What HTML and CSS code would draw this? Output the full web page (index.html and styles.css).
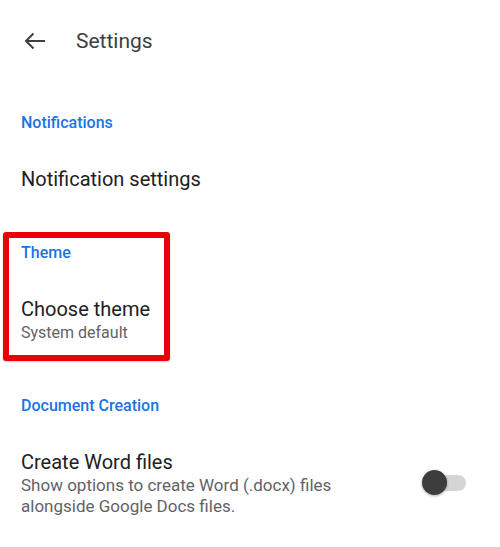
FILE: index.html
```html
<!DOCTYPE html>
<html>
<head>
    <title>Settings</title>
    <link rel="stylesheet" href="styles.css">
</head>
<body>
    <header class="app-bar">
        <svg class="back-icon" width="22" height="18" viewBox="0 0 22 18">
            <path d="M21 9H2M9.5 1.5L2 9l7.5 7.5" fill="none" stroke="#3c4043" stroke-width="2"/>
        </svg>
        <h1 class="app-title">Settings</h1>
    </header>

    <main class="settings">
        <section class="group">
            <h2 class="group-title">Notifications</h2>
            <div class="item">
                <div class="item-title">Notification settings</div>
            </div>
        </section>

        <section class="group group-marked">
            <h2 class="group-title">Theme</h2>
            <div class="item">
                <div class="item-title">Choose theme</div>
                <div class="item-summary">System default</div>
            </div>
        </section>

        <section class="group group-docs">
            <h2 class="group-title">Document Creation</h2>
            <div class="item item-switch">
                <div class="item-text">
                    <div class="item-title">Create Word files</div>
                    <div class="item-summary item-desc">Show options to create Word (.docx) files<br>alongside Google Docs files.</div>
                </div>
                <div class="switch">
                    <span class="switch-track"></span>
                    <span class="switch-thumb"></span>
                </div>
            </div>
        </section>
    </main>
</body>
</html>
```

FILE: styles.css
```css
body {
    margin: 0;
    font-family: Roboto, "Liberation Sans", sans-serif;
    background: #fff;
    color: #202124;
}
.app-bar {
    height: 82px;
    display: flex;
    align-items: center;
    padding-left: 24px;
    gap: 30px;
}
.back-icon {
    display: block;
}
.app-title {
    margin: 0;
    font-size: 21px;
    font-weight: 400;
    line-height: 28px;
    color: #3c4043;
}
.settings {
    padding: 0 21px;
}
.group {
    margin-top: 51px;
}
.group:first-child {
    margin-top: 31px;
}
.group-docs {
    margin-top: 53px;
}
.group-title {
    margin: 0 0 33px;
    font-size: 16px;
    font-weight: 500;
    line-height: 20px;
    color: #1a73e8;
}
.item-title {
    font-size: 20px;
    line-height: 26px;
    color: #202124;
}
.item-summary {
    font-size: 16px;
    line-height: 21px;
    color: #5f6368;
}
.item-desc {
    font-size: 17px;
    line-height: 21px;
}
.item-switch {
    display: flex;
    align-items: center;
    justify-content: space-between;
}
.switch {
    position: relative;
    width: 44px;
    height: 26px;
    margin-right: 13px;
}
.switch-track {
    position: absolute;
    left: 6px;
    right: 0;
    top: 5px;
    height: 16px;
    border-radius: 8px;
    background: #d5d5d5;
}
.switch-thumb {
    position: absolute;
    left: 0;
    top: 0;
    width: 25px;
    height: 25px;
    border-radius: 50%;
    background: #3c3c3c;
    box-shadow: 0 1px 3px rgba(0, 0, 0, 0.35);
}
.group-marked {
    position: relative;
}
.group-marked::after {
    content: "";
    position: absolute;
    left: -18px;
    top: -11px;
    width: 155px;
    height: 117px;
    border: 6px solid #e8000b;
    border-radius: 3px;
    box-shadow: 0 1px 2px rgba(0, 0, 0, 0.2);
}
```
